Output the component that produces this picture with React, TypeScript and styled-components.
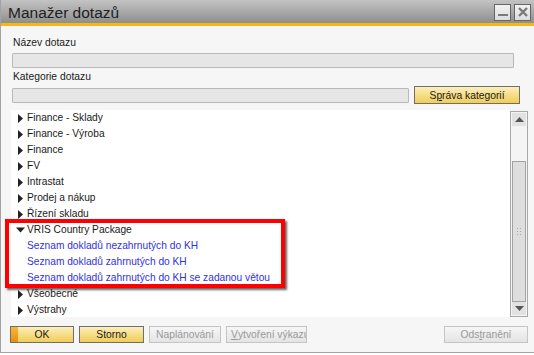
import React from 'react';
import styled, { createGlobalStyle, css } from 'styled-components';

const GlobalStyle = createGlobalStyle`
	html, body {
		margin: 0;
		padding: 0;
		background: #ffffff;
	}
	body {
		font-family: 'Liberation Sans', Arial, sans-serif;
	}
`

interface TreeNode {
	label: string
	children?: string[]
	open?: boolean
}

const categories: TreeNode[] = [
	{ label: 'Finance - Sklady' },
	{ label: 'Finance - Výroba' },
	{ label: 'Finance' },
	{ label: 'FV' },
	{ label: 'Intrastat' },
	{ label: 'Prodej a nákup' },
	{ label: 'Řízení skladu' },
	{
		label: 'VRIS Country Package',
		open: true,
		children: [
			'Seznam dokladů nezahrnutých do KH',
			'Seznam dokladů zahrnutých do KH',
			'Seznam dokladů zahrnutých do KH se zadanou větou',
		],
	},
	{ label: 'Všeobecné' },
	{ label: 'Výstrahy' },
]

const Arrow: React.FC<{ open?: boolean }> = ({ open }) => (
	open ? (
		<svg width="9" height="6" viewBox="0 0 9 6"><path d="M0 0.5 H9 L4.5 5.5 Z" fill="#222" /></svg>
	) : (
		<svg width="5" height="9" viewBox="0 0 5 9"><path d="M0 0 L5 4.5 L0 9 Z" fill="#222" /></svg>
	)
)

export default function App() {
	return (
		<>
			<GlobalStyle />
			<Window>
				<TitleBar>
					<Title>Manažer dotazů</Title>
					<TitleButtons>
						<CaptionButton>
							<svg width="10" height="10" viewBox="0 0 10 10"><rect x="0" y="7" width="10" height="2" fill="#7a7a7a" /></svg>
						</CaptionButton>
						<CaptionButton>
							<svg width="10" height="10" viewBox="0 0 10 10"><path d="M1 1 L9 9 M9 1 L1 9" stroke="#7a7a7a" strokeWidth="2.4" /></svg>
						</CaptionButton>
					</TitleButtons>
				</TitleBar>
				<Stripe />

				<Content>
					<FieldLabel>Název dotazu</FieldLabel>
					<TextBox $width={502} />
					<FieldLabel $gap={2}>Kategorie dotazu</FieldLabel>
					<CategoryRow>
						<TextBox $width={397} />
						<Button $width={106} $height={18}>S<u>p</u>ráva kategorií</Button>
					</CategoryRow>

					<TreePanel>
						<TreeList>
							{categories.map((cat) => (
								<React.Fragment key={cat.label}>
									<TreeRow>
										<ArrowCell><Arrow open={cat.open} /></ArrowCell>
										{cat.label}
									</TreeRow>
									{cat.open && cat.children?.map((child) => (
										<TreeRow key={child} $link>{child}</TreeRow>
									))}
								</React.Fragment>
							))}
						</TreeList>
						<ScrollBar>
							<ScrollArrow>
								<svg width="9" height="5" viewBox="0 0 9 5"><path d="M0 5 L4.5 0 L9 5 Z" fill="#555" /></svg>
							</ScrollArrow>
							<ScrollTrack>
								<Thumb>
									<svg width="5" height="7" viewBox="0 0 5 7">
										{[0, 3, 6].map((y) => (
											<React.Fragment key={y}>
												<rect x="0" y={y} width="1" height="1" fill="#a8a8a8" />
												<rect x="3" y={y} width="1" height="1" fill="#a8a8a8" />
											</React.Fragment>
										))}
									</svg>
								</Thumb>
							</ScrollTrack>
							<ScrollArrow>
								<svg width="9" height="5" viewBox="0 0 9 5"><path d="M0 0 L4.5 5 L9 0 Z" fill="#555" /></svg>
							</ScrollArrow>
						</ScrollBar>
					</TreePanel>
				</Content>

				<Footer>
					<Button $width={64} $default>OK</Button>
					<Button $width={65}>Storno</Button>
					<Button $width={72} $disabled>Naplánování</Button>
					<Button $width={81} $disabled $clip><u>V</u>ytvoření výkazu</Button>
					<Spacer />
					<Button $width={84} $disabled>Ods<u>t</u>ranění</Button>
				</Footer>

				<Highlight />
			</Window>
		</>
	)
}

const Window = styled.div`
	position: relative;
	width: 534px;
	height: 352px;
	background: #f6f6f6;
	border-left: 1px solid #a3a3a3;
	border-bottom: 1px solid #a3a3a3;
	box-sizing: content-box;
	display: flex;
	flex-direction: column;
	overflow: hidden;
`

const TitleBar = styled.div`
	height: 23px;
	display: flex;
	align-items: center;
	justify-content: space-between;
	padding: 0 4px 0 7px;
	background: linear-gradient(to bottom, #c3c3c3 0%, #a9a9a9 50%, #8e8e8e 100%);
`

const Title = styled.div`
	font-size: 15.5px;
	color: #1e1e1e;
	line-height: 23px;
	margin-top: 1px;
`

const TitleButtons = styled.div`
	display: flex;
	gap: 3px;
	margin-top: 1px;
`

const CaptionButton = styled.div`
	width: 15px;
	height: 15px;
	border: 1px solid #666;
	background: linear-gradient(to bottom, #f2f2f2, #dcdcdc);
	display: flex;
	align-items: center;
	justify-content: center;
`

const Stripe = styled.div`
	height: 3px;
	background: #f7b816;
`

const Content = styled.div`
	display: flex;
	flex-direction: column;
	padding: 0 7px 0 10px;
`

const FieldLabel = styled.div<{ $gap?: number }>`
	margin-top: ${(p) => p.$gap ?? 10}px;
	padding-left: 2px;
	height: 14px;
	line-height: 14px;
	font-size: 10.3px;
	color: #1a1a1a;
`

const TextBox = styled.div<{ $width: number }>`
	width: ${(p) => p.$width}px;
	height: 15px;
	margin: 3px 0 0 1px;
	box-sizing: border-box;
	border: 1px solid #b9b9b9;
	background: #e6e6e6;
	border-radius: 1px;
`

const CategoryRow = styled.div`
	display: flex;
	align-items: center;
	gap: 5px;
	margin-top: 2px;
	height: 18px;

	${TextBox} {
		margin-top: 0;
	}
`

const TreePanel = styled.div`
	margin-top: 6px;
	height: 207px;
	display: flex;
`

const TreeList = styled.div`
	flex: 1;
	background: #ffffff;
	overflow: hidden;
`

const TreeRow = styled.div<{ $link?: boolean }>`
	height: 16px;
	line-height: 16px;
	display: flex;
	align-items: center;
	font-size: 10.2px;
	white-space: nowrap;
	color: ${(p) => (p.$link ? '#3131e3' : '#1a1a1a')};
	padding-left: ${(p) => (p.$link ? 16 : 2)}px;
`

const ArrowCell = styled.span`
	width: 14px;
	display: flex;
	justify-content: center;
	align-items: center;
`

const ScrollBar = styled.div`
	width: 18px;
	margin-top: 1px;
	box-sizing: border-box;
	border: 1px solid #a8a8a8;
	background: #f4f4f4;
	display: flex;
	flex-direction: column;
	padding: 1px;
`

const ScrollArrow = styled.div`
	height: 13px;
	background: #e2e2e2;
	display: flex;
	align-items: center;
	justify-content: center;
`

const ScrollTrack = styled.div`
	flex: 1;
	display: flex;
	flex-direction: column;
	padding-top: 35px;
`

const Thumb = styled.div`
	flex: 1;
	box-sizing: border-box;
	border: 1px solid #a2a2a2;
	background: #dedede;
	display: flex;
	align-items: center;
	justify-content: center;
`

const Footer = styled.div`
	display: flex;
	align-items: flex-start;
	gap: 5px;
	padding: 9px 7px 0 9px;
`

const Spacer = styled.div`
	flex: 1;
`

const Button = styled.div<{ $width: number; $height?: number; $default?: boolean; $disabled?: boolean; $clip?: boolean }>`
	position: relative;
	width: ${(p) => p.$width}px;
	height: ${(p) => p.$height ?? 17}px;
	box-sizing: border-box;
	display: flex;
	align-items: center;
	justify-content: center;
	font-size: 10.3px;
	white-space: nowrap;
	overflow: hidden;
	color: #1a1a1a;
	border: 1px solid #6e6e6e;
	background: linear-gradient(to bottom, #fcefbd 0%, #f6dd86 50%, #f1cd5a 100%);

	${(p) => p.$clip && css`
		justify-content: flex-start;
		padding-left: 4px;
	`}

	${(p) => p.$default && css`
		&::before {
			content: '';
			position: absolute;
			left: 0;
			top: 0;
			bottom: 0;
			width: 7px;
			background: linear-gradient(to bottom, #f6b93a, #ea8e10);
		}
	`}

	${(p) => p.$disabled && css`
		color: #9a9a9a;
		border-color: #c4c4c4;
		background: linear-gradient(to bottom, #f6f6f6, #e4e4e4);
	`}
`

const Highlight = styled.div`
	position: absolute;
	left: 4px;
	top: 219px;
	width: 280px;
	height: 69px;
	box-sizing: border-box;
	border: 4px solid #ff0000;
	box-shadow: 2px 2px 2px rgba(0, 0, 0, 0.6);
	pointer-events: none;
`
